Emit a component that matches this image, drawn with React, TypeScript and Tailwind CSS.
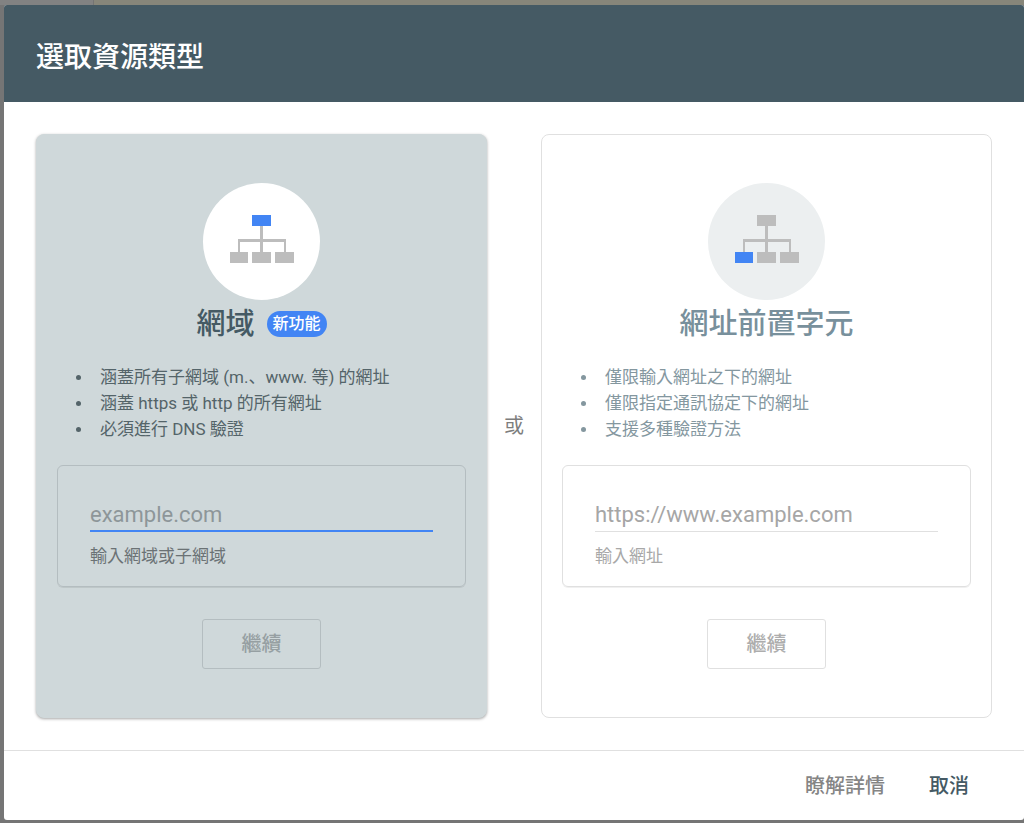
import React from "react";

type Highlight = "root" | "leaf";

function SiteTree({ highlight }: { highlight: Highlight }) {
  const gray = "#bdbdbd";
  const blue = "#4285f4";
  return (
    <svg width="64" height="48" viewBox="0 0 64 48" shapeRendering="crispEdges" aria-hidden="true">
      <path d="M8 24H56V37H54V27H33V37H30V27H10V37H8Z" fill={gray} />
      <rect x="30" y="11" width="3" height="14" fill={gray} />
      <rect x="22" y="0" width="19" height="11" fill={highlight === "root" ? blue : gray} />
      <rect x="0" y="37" width="18" height="11" fill={highlight === "leaf" ? blue : gray} />
      <rect x="22" y="37" width="19" height="11" fill={gray} />
      <rect x="45" y="37" width="19" height="11" fill={gray} />
    </svg>
  );
}

interface PropertyCardProps {
  id: string;
  title: string;
  badge?: string;
  points: string[];
  placeholder: string;
  hint: string;
  highlight: Highlight;
  active?: boolean;
}

function PropertyCard({ id, title, badge, points, placeholder, hint, highlight, active }: PropertyCardProps) {
  return (
    <section
      className={
        "flex min-w-0 flex-1 flex-col items-center rounded-lg border px-5 py-12 " +
        (active
          ? "border-[#cfd8da] bg-[#cfd8da] shadow-[0_1px_3px_rgba(0,0,0,0.35)]"
          : "border-[#e0e0e0] bg-white")
      }
    >
      <div
        className={
          "flex size-[117px] items-start justify-center rounded-full pt-8 " + (active ? "bg-white" : "bg-[#eceff0]")
        }
      >
        <SiteTree highlight={highlight} />
      </div>
      <div className="flex h-12 items-center gap-3">
        <h2 className={"text-[29px] leading-[46px] font-medium " + (active ? "text-[#455a64]" : "text-[#78909c]")}>
          {title}
        </h2>
        {badge && (
          <span className="rounded-full bg-[#4285f4] px-1.5 text-[16px] leading-[26px] font-medium text-white">
            {badge}
          </span>
        )}
      </div>
      <ul
        className={
          "mt-4 w-full pl-[19px] text-[17px] leading-[26px] " + (active ? "text-[#546469]" : "text-[#84979f]")
        }
      >
        {points.map((point) => (
          <li key={point} className="flex items-center gap-[19px]">
            <span className="size-[5px] shrink-0 rounded-full bg-current" />
            <span>{point}</span>
          </li>
        ))}
      </ul>
      <div
        className={
          "mt-[23px] flex h-[122px] w-full flex-col rounded-md border px-8 pt-8 " +
          (active
            ? "border-[#b4bdc0] shadow-[0_1px_0_rgba(0,0,0,0.08)]"
            : "border-[#e0e0e0] shadow-[0_1px_0_rgba(0,0,0,0.06)]")
        }
      >
        <input
          id={id}
          type="text"
          placeholder={placeholder}
          className={
            "h-[34px] w-full bg-transparent text-[22px] outline-none " +
            (active
              ? "border-b-2 border-[#4285f4] placeholder:text-[#8d9699]"
              : "border-b border-[#e0e0e0] placeholder:text-[#a6a6a6]")
          }
        />
        <label
          htmlFor={id}
          className={"mt-[11px] text-[17px] leading-[26px] " + (active ? "text-[#6b7275]" : "text-[#a8a8a8]")}
        >
          {hint}
        </label>
      </div>
      <button
        type="button"
        className={
          "mt-8 h-[50px] w-[119px] rounded-[3px] border text-[20px] font-medium " +
          (active ? "border-[#b4bdc0] text-[#969fa2]" : "border-[#e0e0e0] text-[#adadad]")
        }
      >
        繼續
      </button>
    </section>
  );
}

export default function App() {
  return (
    <div className="flex min-h-screen flex-col bg-[#757575] font-[Roboto,'Noto_Sans_CJK_JP',sans-serif]">
      <div className="flex h-[5px]">
        <div className="w-[94px] border-r border-[#747474] bg-[#828282]" />
        <div className="flex-1 bg-[#87867a]" />
      </div>
      <main role="dialog" aria-labelledby="dialog-title" className="ml-1 overflow-hidden rounded-[3px] bg-white">
        <header className="bg-[#455a64] px-8 pt-8 pb-6">
          <h1 id="dialog-title" className="text-[28px] leading-[41px] font-medium text-white">
            選取資源類型
          </h1>
        </header>
        <div className="flex items-stretch p-8">
          <PropertyCard
            id="domain"
            title="網域"
            badge="新功能"
            points={["涵蓋所有子網域 (m.、www. 等) 的網址", "涵蓋 https 或 http 的所有網址", "必須進行 DNS 驗證"]}
            placeholder="example.com"
            hint="輸入網域或子網域"
            highlight="root"
            active
          />
          <div className="flex w-[54px] items-center justify-center text-[20px] text-[#7d7d7d]">或</div>
          <PropertyCard
            id="url-prefix"
            title="網址前置字元"
            points={["僅限輸入網址之下的網址", "僅限指定通訊協定下的網址", "支援多種驗證方法"]}
            placeholder="https://www.example.com"
            hint="輸入網址"
            highlight="leaf"
          />
        </div>
        <footer className="flex h-[70px] items-center justify-end gap-11 border-t border-[#e0e0e0] pr-[55px] text-[20px] font-medium">
          <a href="#learn-more" className="text-[#858585]">
            瞭解詳情
          </a>
          <button type="button" className="text-[#455a64]">
            取消
          </button>
        </footer>
      </main>
    </div>
  );
}
